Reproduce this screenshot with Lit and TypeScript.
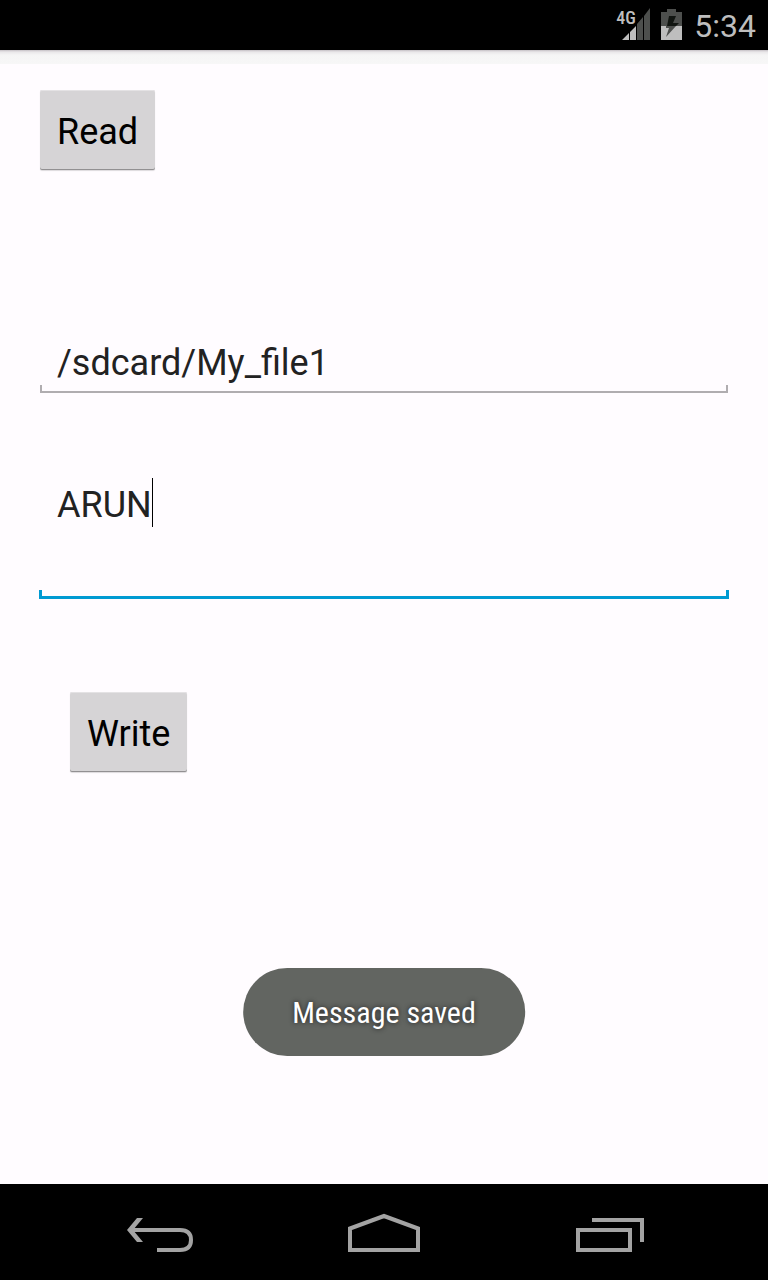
import { LitElement, html, css } from "lit";
import { customElement, state } from "lit/decorators.js";

@customElement("status-bar")
class StatusBar extends LitElement {
  static styles = css`
    :host {
      display: flex;
      align-items: center;
      justify-content: flex-end;
      height: 50px;
      padding-right: 12px;
      background: #000;
      color: #bebebe;
      font-family: "Roboto", sans-serif;
    }
    .network {
      position: relative;
      display: flex;
      margin-right: 11px;
    }
    .type {
      position: absolute;
      left: 0;
      top: 0;
      font-family: "Roboto Condensed", "Roboto", sans-serif;
      font-size: 18px;
      line-height: 20px;
      font-weight: 500;
    }
    .battery {
      margin-right: 11px;
    }
    svg {
      display: block;
    }
    .time {
      font-size: 32px;
      line-height: 48px;
      padding-top: 2px;
    }
  `;

  render() {
    return html`
      <div class="network">
        <svg width="34" height="34" viewBox="0 0 34 34" aria-hidden="true">
          <path fill="#bebebe" d="M6 32L13 25V32ZM14 24L20 18V32H14Z" />
          <path fill="#4d4f4d" d="M21 16L27 9V32H21ZM28 8L34 0V32H28Z" />
        </svg>
        <span class="type">4G</span>
      </div>
      <svg class="battery" width="22" height="34" viewBox="0 0 22 34" aria-hidden="true">
        <path fill="#4d4f4d" d="M6 1H15V4H21V18H0V4H6Z" />
        <path fill="#bebebe" d="M0 18H21V32H0Z" />
        <path fill="#111511" d="M8 8H15L12 15H18L15 18H6Z" />
        <path fill="#4d4f4d" d="M5 18H15L5 29L8 20H5Z" />
      </svg>
      <span class="time">5:34</span>
    `;
  }
}

@customElement("nav-bar")
class NavBar extends LitElement {
  static styles = css`
    :host {
      display: flex;
      justify-content: center;
      height: 96px;
      background: #000;
    }
    button {
      width: 160px;
      margin: 0 33px;
      padding: 0;
      border: 0;
      background: none;
      display: flex;
      align-items: center;
      justify-content: center;
    }
    svg {
      fill: none;
      stroke: #a3a3a3;
      stroke-width: 4;
    }
  `;

  render() {
    return html`
      <button aria-label="Back">
        <svg width="96" height="96" viewBox="0 0 96 96">
          <path d="M22 46H70C78 46 81 50 81 56C81 62 78 66 70 66H47" />
          <path fill="#a3a3a3" stroke="none" d="M17 46L27 34H33L23 46L33 58H27Z" />
        </svg>
      </button>
      <button aria-label="Home">
        <svg width="96" height="96" viewBox="0 0 96 96">
          <path d="M14 66V44.5L48 32L82 44.5V66Z" />
        </svg>
      </button>
      <button aria-label="Recent apps">
        <svg width="96" height="96" viewBox="0 0 96 96">
          <path d="M16 46H68V66H16ZM30 36H80V58" />
        </svg>
      </button>
    `;
  }
}

@customElement("app-root")
class AppRoot extends LitElement {
  static styles = css`
    :host {
      display: flex;
      flex-direction: column;
      min-height: 100vh;
      background: #fffcff;
      font-family: "Roboto", sans-serif;
    }
    main {
      position: relative;
      flex: 1;
      display: flex;
      flex-direction: column;
      align-items: flex-start;
      padding: 0 40px;
    }
    .shade {
      align-self: stretch;
      height: 14px;
      margin: 0 -40px 26px;
      background: linear-gradient(#c4c0c4, #e9e7e9 2px, #f5f5f5 5px, #f7f7f7);
    }
    .btn {
      height: 80px;
      padding: 4px 17px 0;
      border: 0;
      border-radius: 2px;
      background: #d6d4d6;
      box-shadow: inset 0 1px #e4e2e4, inset 0 -1px #929092, 0 1px 1px #dddadd;
      color: #000;
      font: 36px "Roboto", sans-serif;
    }
    .write {
      margin: 93px 0 0 30px;
    }
    .field {
      align-self: stretch;
      display: flex;
      flex-direction: column;
    }
    .path {
      margin-top: 167px;
    }
    .message {
      margin: 85px -1px 0;
    }
    .entry {
      display: flex;
      padding: 0 17px;
    }
    .message .entry {
      height: 112px;
      padding: 0 18px;
    }
    .text {
      box-sizing: border-box;
      margin: 0;
      padding: 3px 0 0;
      border: 0;
      outline: 0;
      background: none;
      color: #222;
      font: 36px/48px "Roboto", sans-serif;
      resize: none;
      overflow: hidden;
    }
    .path .text {
      flex: 1;
      min-width: 0;
      height: 48px;
    }
    .message .text {
      field-sizing: content;
      caret-color: transparent;
    }
    .caret {
      width: 1px;
      height: 49px;
      background: #000;
    }
    .rule {
      height: 6px;
      border: 2px solid #b0adb0;
      border-top: 0;
    }
    .active {
      border: 3px solid #009ad2;
      border-top: 0;
    }
    .toast {
      position: absolute;
      left: 50%;
      bottom: 128px;
      transform: translateX(-50%);
      padding: 25px 49px 23px;
      border-radius: 44px;
      background: #626561;
      color: #fff;
      font-family: "Roboto Condensed", "Roboto", sans-serif;
      font-size: 30px;
      line-height: 40px;
      white-space: nowrap;
      text-shadow: 0 0 5px #222;
    }
  `;

  @state() private path = "/sdcard/My_file1";
  @state() private message = "ARUN";

  render() {
    return html`
      <status-bar></status-bar>
      <main>
        <div class="shade"></div>
        <button class="btn">Read</button>
        <div class="field path">
          <div class="entry">
            <input
              class="text"
              aria-label="File path"
              .value=${this.path}
              @input=${(e: Event) => (this.path = (e.target as HTMLInputElement).value)}
            />
          </div>
          <div class="rule"></div>
        </div>
        <div class="field message">
          <div class="entry">
            <textarea
              class="text"
              rows="1"
              aria-label="Message"
              spellcheck="false"
              .value=${this.message}
              @input=${(e: Event) => (this.message = (e.target as HTMLTextAreaElement).value)}
            ></textarea>
            <span class="caret"></span>
          </div>
          <div class="rule active"></div>
        </div>
        <button class="btn write">Write</button>
        <div class="toast" role="status">Message saved</div>
      </main>
      <nav-bar></nav-bar>
    `;
  }
}
